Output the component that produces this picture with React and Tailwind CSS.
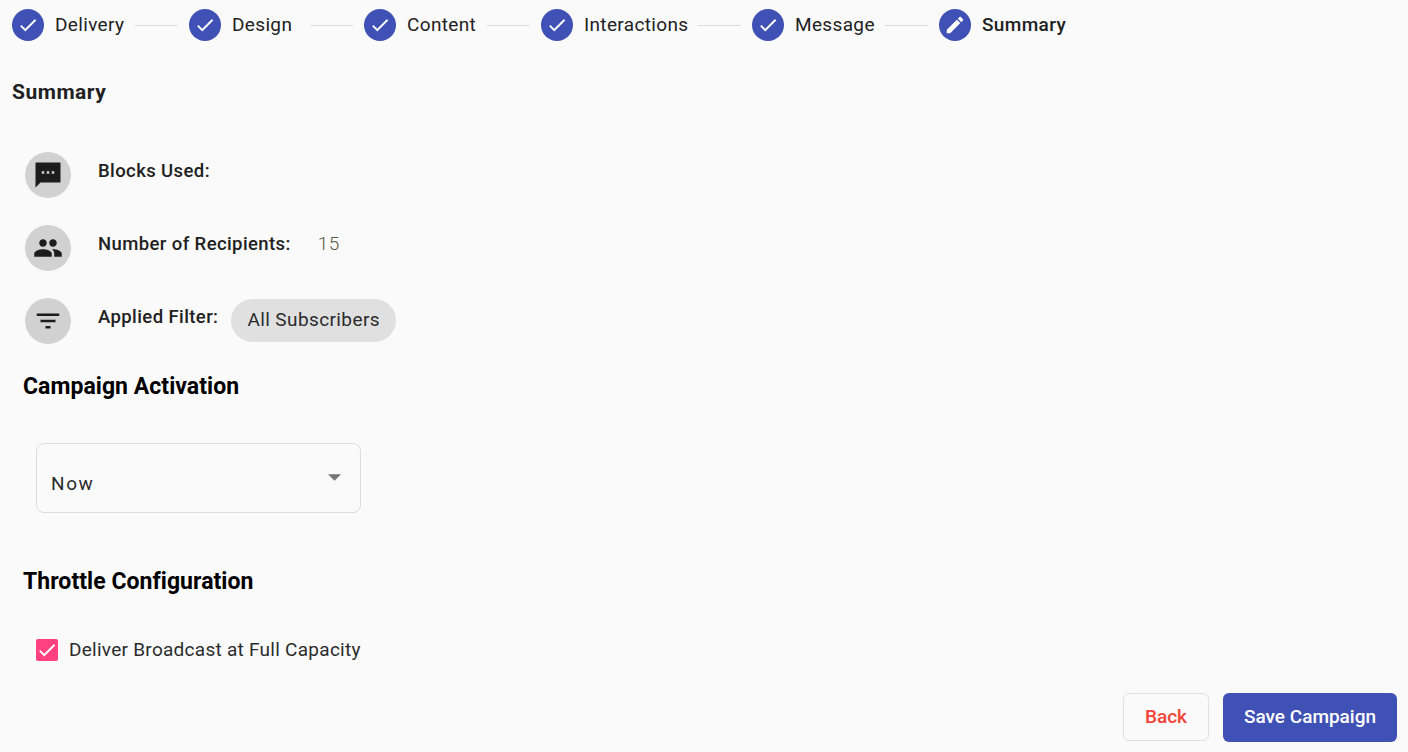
const paths = {
  check: 'M9 16.17L4.83 12l-1.42 1.41L9 19 21 7l-1.41-1.41z',
  edit: 'M3 17.25V21h3.75L17.81 9.94l-3.75-3.75L3 17.25zM20.71 7.04c.39-.39.39-1.02 0-1.41l-2.34-2.34c-.39-.39-1.02-.39-1.41 0l-1.83 1.83 3.75 3.75 1.83-1.83z',
  sms: 'M21.5 2h-19c-.28 0-.5.22-.5.5V22l4-4h15.5c.28 0 .5-.22.5-.5v-15c0-.28-.22-.5-.5-.5zM9 11H7V9h2v2zm4 0h-2V9h2v2zm4 0h-2V9h2v2z',
  people: 'M16 11c1.66 0 2.99-1.34 2.99-3S17.66 5 16 5c-1.66 0-3 1.34-3 3s1.34 3 3 3zm-8 0c1.66 0 2.99-1.34 2.99-3S9.66 5 8 5C6.34 5 5 6.34 5 8s1.34 3 3 3zm0 2c-2.33 0-7 1.17-7 3.5V19h14v-2.5c0-2.33-4.67-3.5-7-3.5zm8 0c-.29 0-.62.02-.97.05 1.16.84 1.97 1.97 1.97 3.45V19h6v-2.5c0-2.33-4.67-3.5-7-3.5z',
  filter: 'M10 18h4v-2h-4v2zM3 6v2h18V6H3zm3 7h12v-2H6v2z',
}

const Icon = ({name, className}) => (
  <svg viewBox="0 0 24 24" fill="currentColor" className={className}>
    <path d={paths[name]} />
  </svg>
)

const steps = [
  {label: 'Delivery', width: 'w-[69px]'},
  {label: 'Design', width: 'w-[67px]'},
  {label: 'Content', width: 'w-[69px]'},
  {label: 'Interactions', width: 'w-[103px]'},
  {label: 'Message', width: 'w-[79px]'},
]

const Step = ({label, width, active}) => (
  <div className="flex items-center">
    <div className="w-8 h-8 rounded-full bg-[#3f51b5] text-white flex items-center justify-center">
      <Icon name={active ? 'edit' : 'check'} className="w-[22px] h-[22px]" />
    </div>
    <span className={`ml-[11px] whitespace-nowrap text-[19px] leading-[24px] tracking-[0.35px] text-[#212121] ${width} ${active ? 'font-medium' : 'font-normal'}`}>
      {label}
    </span>
  </div>
)

const InfoRow = ({icon, children}) => (
  <div className="flex items-start h-[46px]">
    <div className="w-[46px] h-[46px] rounded-full bg-[#d1d1d1] text-[#1c1c1c] flex items-center justify-center shrink-0">
      <Icon name={icon} className="w-[30px] h-[30px]" />
    </div>
    {children}
  </div>
)

const App = () => {
  return (
    <div className="h-[752px] bg-[#fafafa] overflow-hidden font-['Roboto',sans-serif] text-[#212121] flex flex-col">
      {/* Stepper */}
      <div className="flex items-center pl-3 pt-[9px]">
        {steps.map((step) => (
          <div key={step.label} className="flex items-center">
            <Step label={step.label} width={step.width} />
            <div className="w-[43px] h-px bg-[#dcdcdc] mx-[11px]"></div>
          </div>
        ))}
        <Step label="Summary" active />
      </div>

      <h2 className="ml-3 mt-[37px] text-[21px] leading-[28px] font-bold tracking-[0.5px]">Summary</h2>

      {/* Summary rows */}
      <div className="ml-[25px] mt-[46px] flex flex-col gap-[27px]">
        <InfoRow icon="sms">
          <span className="ml-[27px] mt-[7px] text-[18.5px] leading-[24px] font-medium tracking-[0.4px]">Blocks Used:</span>
        </InfoRow>
        <InfoRow icon="people">
          <span className="ml-[27px] mt-[7px] text-[18.5px] leading-[24px] font-medium tracking-[0.4px]">Number of Recipients:</span>
          <span className="ml-[27px] mt-[7px] text-[19px] leading-[24px] font-light tracking-[0.5px] text-[#5a5a40]">15</span>
        </InfoRow>
        <InfoRow icon="filter">
          <span className="ml-[27px] mt-[7px] text-[18.5px] leading-[24px] font-medium tracking-[0.4px]">Applied Filter:</span>
          <span className="ml-[13px] mt-px h-[43px] px-4 rounded-full bg-[#e0e0e0] flex items-center text-[19px] tracking-[0.4px] text-[#2b2b2b]">All Subscribers</span>
        </InfoRow>
      </div>

      <h3 className="ml-[23px] mt-[27px] text-[23px] leading-[32px] font-bold text-black tracking-[0.05px]">Campaign Activation</h3>

      {/* Activation select */}
      <div className="ml-9 mt-[40px] w-[325px] h-[70px] border border-[#dcdcdc] rounded-lg flex justify-between px-[14px]">
        <span className="mt-[28px] text-[19px] leading-[24px] tracking-[1.6px] text-[#2b2b2b]">Now</span>
        <svg viewBox="0 0 16 8" fill="#757575" className="w-[13px] h-[7px] mt-[30px] mr-[5px]">
          <path d="M0 0h16L8 8z" />
        </svg>
      </div>

      <h3 className="ml-[23px] mt-[53px] text-[23px] leading-[32px] font-bold text-black tracking-[0.05px]">Throttle Configuration</h3>

      {/* Throttle checkbox */}
      <div className="ml-9 mt-[40px] flex items-center">
        <div className="w-[22px] h-[22px] rounded-[2px] bg-[#ff4081] text-white flex items-center justify-center">
          <Icon name="check" className="w-[22px] h-[22px]" />
        </div>
        <span className="ml-[11px] text-[19px] leading-[24px] tracking-[0.27px] text-[#2b2b2b]">Deliver Broadcast at Full Capacity</span>
      </div>

      {/* Actions */}
      <div className="mt-[31px] mr-[11px] flex justify-end items-start gap-[14px]">
        <button className="w-[86px] h-[48px] border border-[#e0e0e0] rounded-md text-[19px] font-medium text-[#f44336]">Back</button>
        <button className="w-[174px] h-[49px] rounded-md bg-[#3f51b5] text-white text-[19px] font-medium">Save Campaign</button>
      </div>
    </div>
  )
}

export default App
